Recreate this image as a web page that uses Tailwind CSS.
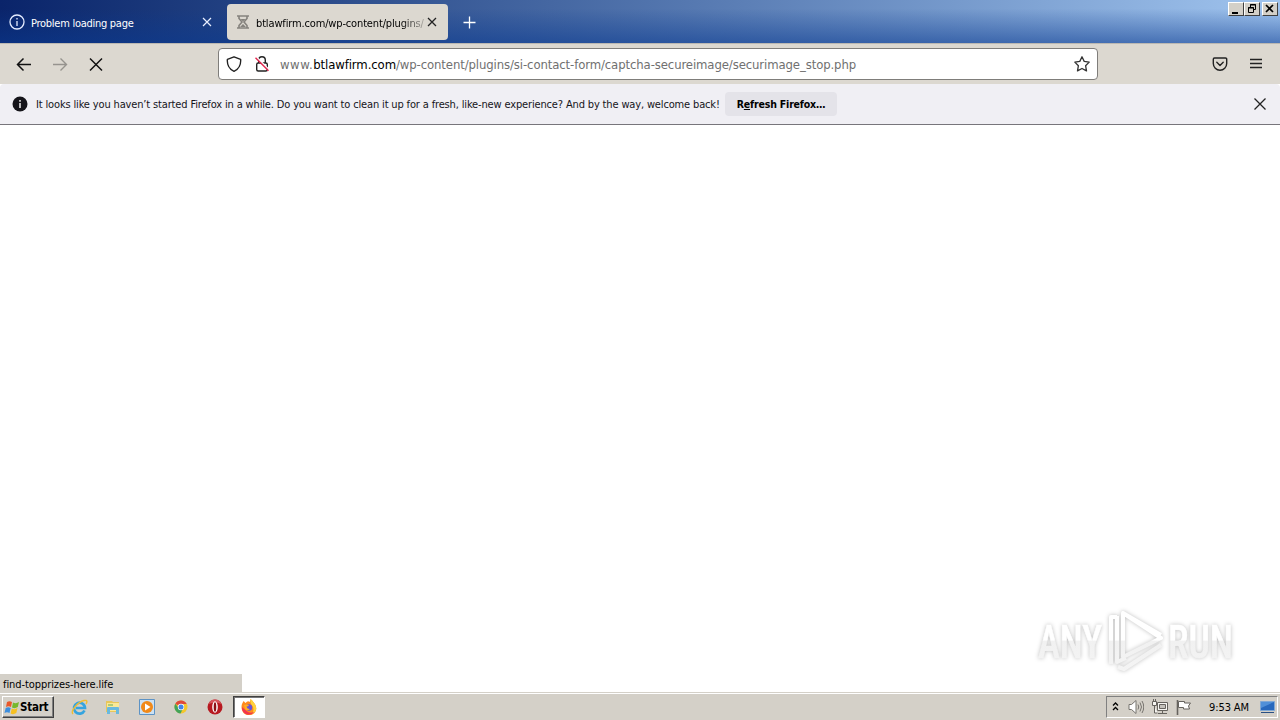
<!DOCTYPE html>
<html lang="en">
<head>
<meta charset="utf-8">
<title>Browser window</title>
<script src="https://cdn.jsdelivr.net/npm/@tailwindcss/browser@4"></script>
</head>
<body class="w-[1280px] h-[720px] overflow-hidden bg-white text-black text-[11px] leading-[14px] font-['DejaVu_Sans_Condensed','DejaVu_Sans',sans-serif] [font-stretch:condensed] whitespace-nowrap">
<div class="flex flex-col h-full">

  <!-- Tab strip -->
  <header class="relative h-[43px] shrink-0 flex items-start bg-linear-to-r from-[#0a246a] to-[#a0c4ee]">
    <div class="absolute inset-0 bg-linear-to-b from-transparent from-20% to-[#0a3a90]/55"></div>
    <div class="relative flex items-center w-[227px] h-[44px] pl-[9px] text-white">
      <svg class="size-4 shrink-0" viewBox="0 0 16 16" fill="none" stroke="#e4ecff" stroke-width="1.3"><circle cx="8" cy="8" r="7"/><path d="M8 7v5M8 4v1.6"/></svg>
      <span class="ml-[6px] mt-[3px] w-[160px] tracking-[-0.27px]">Problem loading page</span>
      <svg class="ml-[11px] size-[10px] shrink-0" viewBox="0 0 10 10" stroke="#e8efff" stroke-width="1.2"><path d="M1 1l8 8M9 1l-8 8"/></svg>
    </div>
    <div class="relative flex items-center mt-1 w-[221px] h-9 rounded bg-[#dcd8d0] pl-[9px]">
      <svg class="w-[14px] h-[14px] shrink-0" viewBox="0 0 14 14" fill="none" stroke="#85827d" stroke-width="1.6"><path d="M1 1h12M1 13h12"/><path d="M3 1v2.5L6 7l-3 3.500V13M11 1v2.500L8 7l3 3.500V13"/><path d="M4.500 4h5L7 6.500zM7 9l3 3H4z" fill="#85827d" stroke="none"/></svg>
      <span class="ml-[6px] mt-[3px] w-[168px] tracking-[-0.15px] [mask-image:linear-gradient(to_right,black_145px,transparent_175px)]">btlawfirm.com/wp-content/plugins/</span>
      <svg class="ml-[3px] size-[10px] shrink-0" viewBox="0 0 10 10" stroke="#222" stroke-width="1.3"><path d="M1 1l8 8M9 1l-8 8"/></svg>
    </div>
    <svg class="relative ml-[15px] mt-4 size-[13px]" viewBox="0 0 13 13" stroke="#fff" stroke-width="1.3"><path d="M6.500 .5v12M.5 6.500h12"/></svg>
    <div class="relative ml-auto mr-[2px] mt-[2px] flex">
      <div class="w-4 h-[14px] bg-[#d4d0c8] border border-t-white border-l-white border-b-[#404040] border-r-[#404040]"><svg class="w-[14px] h-3" viewBox="0 0 14 12"><path d="M3 9h6v2H3z"/></svg></div>
      <div class="w-4 h-[14px] bg-[#d4d0c8] border border-t-white border-l-white border-b-[#404040] border-r-[#404040]"><svg class="w-[14px] h-3" viewBox="0 0 14 12" fill="none" stroke="#000"><path d="M5.500 4V1.500h5v5H9M5 2h6"/><path d="M3.500 4.500h5v5h-5zM3 5h6"/></svg></div>
      <div class="ml-[2px] w-4 h-[14px] bg-[#d4d0c8] border border-t-white border-l-white border-b-[#404040] border-r-[#404040]"><svg class="w-[14px] h-3" viewBox="0 0 14 12" stroke="#000" stroke-width="1.700"><path d="M3 2l7 7M10 2L3 9"/></svg></div>
    </div>
  </header>

  <!-- Navigation bar -->
  <nav class="flex items-center h-[41px] shrink-0 bg-[#dcd8d0] border-t border-[#bbb8b2] pl-4">
    <svg class="size-4" viewBox="0 0 16 16" fill="none" stroke="#111" stroke-width="1.500"><path d="M15 8.500H1.500M7.500 2.500L1.500 8.500l6 6"/></svg>
    <svg class="ml-5 size-4" viewBox="0 0 16 16" fill="none" stroke="#96938e" stroke-width="1.400"><path d="M1 8.500h13.500M8.500 2.500l6 6-6 6"/></svg>
    <svg class="ml-5 size-4" viewBox="0 0 16 16" stroke="#111" stroke-width="1.500"><path d="M2 2.500l12 12M14 2.500L2 14.500"/></svg>
    <div class="ml-[114px] w-[880px] h-8 flex items-center bg-white border border-[#7f7d7a] rounded px-[7px]">
      <svg class="size-4" viewBox="0 0 16 16" fill="none" stroke="#222" stroke-width="1.400" stroke-linejoin="round"><path d="M8 .8L14.600 3.300c.5 5-1.800 10-6.600 12C3.200 13.300.9 8.300 1.400 3.300z"/></svg>
      <svg class="ml-3 size-4" viewBox="0 0 16 16" fill="none" stroke="#222" stroke-width="1.400"><path d="M4.700 7V4a3.300 3.300 0 0 1 6.600 0v3"/><rect x="2.700" y="7" width="10.600" height="8" rx="1.500"/><path d="M2.200 .8l13 13" stroke="#fff" stroke-width="1.500"/><path d="M1.500 1.800l13 13" stroke="#e22850"/></svg>
      <span class="ml-[10px] mt-px text-[13px] leading-4 text-[#707070] tracking-[-0.11px]"><span class="tracking-[0.5px]">www.</span><span class="text-black tracking-[-0.1px]">btlawfirm.com</span>/wp-content/plugins/si-contact-form/captcha-secureimage/securimage_stop.php</span>
      <svg class="ml-auto size-4" viewBox="0 0 16 16" fill="none" stroke="#333" stroke-width="1.300" stroke-linejoin="round"><path d="M8 .8l2.200 4.600 5 .7-3.600 3.600.9 5.200L8 12.500l-4.500 2.400.9-5.200L.8 6.100l5-.7z"/></svg>
    </div>
    <svg class="ml-[114px] size-4" viewBox="0 0 16 16" fill="none" stroke="#222" stroke-width="1.400" stroke-linecap="round" stroke-linejoin="round"><path d="M2.500 2h11a1.200 1.200 0 0 1 1.200 1.200V7.500a6.700 6.700 0 0 1-13.400 0V3.200A1.200 1.200 0 0 1 2.500 2zM4.800 6.300L8 9.400l3.200-3.100"/></svg>
    <svg class="ml-5 size-4" viewBox="0 0 16 16" stroke="#222" stroke-width="1.300"><path d="M2 3.500h12M2 7.500h12M2 11.500h12"/></svg>
  </nav>

  <!-- Notification bar -->
  <section class="flex items-center h-[41px] shrink-0 bg-[#f0eff4] border-b border-[#77757b] rounded-t pl-3 pr-[13px]">
    <svg class="size-4" viewBox="0 0 16 16"><circle cx="8" cy="8" r="7.500" fill="#15141a"/><path d="M8 7v5M8 4v1.700" stroke="#fff" stroke-width="1.400"/></svg>
    <span class="ml-2 mt-px w-[689px] tracking-[-0.15px] text-[#15141a]">It looks like you haven’t started Firefox in a while. Do you want to clean it up for a fresh, like-new experience? And by the way, welcome back!</span>
    <button class="w-[112px] h-6 rounded-sm bg-[#e4e3e9] text-[10.5px] font-bold tracking-[-0.18px]">R<span class="underline">e</span>fresh Firefox…</button>
    <svg class="ml-auto size-[14px]" viewBox="0 0 14 14" stroke="#222" stroke-width="1.300"><path d="M1.500 1.500l11 11M12.500 1.500l-11 11"/></svg>
  </section>

  <!-- Page -->
  <main class="flex-1 min-h-0 flex flex-col justify-end bg-white">
    <svg class="self-end mr-[40px] w-[210px] h-[70px] overflow-visible" viewBox="1030 604 210 70" fill="none">
      <defs><linearGradient id="fade" gradientUnits="userSpaceOnUse" x1="0" y1="610" x2="0" y2="670"><stop offset=".5" stop-color="#fff"/><stop offset=".52" stop-color="#f1f1f1"/><stop offset="1" stop-color="#f4f4f4"/></linearGradient></defs>
      <g class="[filter:drop-shadow(0_0_2px_rgb(0_0_0/0.25))]">
        <g font-family="Roboto, sans-serif" font-weight="500" font-size="47" fill="url(#fade)" stroke="url(#fade)" stroke-width=".6">
          <text x="1038" y="658" textLength="64" lengthAdjust="spacingAndGlyphs">ANY</text>
          <text x="1168" y="658" textLength="65" lengthAdjust="spacingAndGlyphs">RUN</text>
        </g>
        <path d="M1123 613v44l38-19zM1123 613l38 22M1117 617h-6v47M1117 616v46l9-4M1118 667l6 2 37-24" stroke="url(#fade)" stroke-width="4" stroke-linejoin="round"/>
      </g>
    </svg>
    <div class="w-[242px] h-[18px] bg-[#d4d0c8] pl-[3px] pt-1 tracking-[-0.08px]">find-topprizes-here.life</div>
  </main>

  <!-- Taskbar -->
  <footer class="flex items-start h-[28px] shrink-0 bg-[#d4d0c8] border-t border-[#d4d0c8] shadow-[inset_0_1px_#fff] pt-[3px] pl-[2px]">
    <button class="w-[52px] h-[22px] flex items-center bg-[#d4d0c8] border border-t-white border-l-white border-b-[#404040] border-r-[#404040] shadow-[inset_-1px_-1px_#808080] pl-px text-[11.5px] font-bold">
      <svg class="w-4 h-[15px] shrink-0" viewBox="0 0 16 15"><path d="M3 2q2.500-1.500 5 0L7 7Q4.500 5.500 2 7z" fill="#e9582a"/><path d="M9 2.500q3 1.500 6-.5l-1.200 5q-3 2-5.800.5z" fill="#77b82e"/><path d="M1.700 8q2.500-1.500 5 0l-1.200 5Q3 11.500.5 13z" fill="#3c8ede"/><path d="M7.800 8.500q3 1.500 5.700-.5l-1.200 5q-3 2-5.700.5z" fill="#f6c021"/></svg>
      <span class="tracking-[-0.25px]">Start</span>
    </button>
    <div class="flex items-center h-[22px] ml-[17px]">
      <svg class="size-[17px]" viewBox="0 0 17 17" fill="none"><path d="M13.500 11.500A5.500 5.500 0 1 1 14 9H5" stroke="#35a4df" stroke-width="2.700"/><path d="M2 15C-1 12 7 3 13 1.500c4-.8 3 2 2 3.500" stroke="#efbd34" stroke-width="1.400"/></svg>
      <svg class="ml-[17px] size-4" viewBox="0 0 16 16"><path d="M1 2h6l1 1h6v10H1z" fill="#e8c65b"/><path d="M2 4h12v8H2z" fill="#fae897"/><path d="M2 15V9q0-1 1-1h10q1 0 1 1v6h-3v-4H5v4z" fill="#69b9df"/><path d="M3 6h5" stroke="#65ad55"/></svg>
      <svg class="ml-[18px] size-4" viewBox="0 0 16 16"><path d="M.5.5h15v15H.5z" fill="#cce1f3" stroke="#5d93c5"/><circle cx="8" cy="8" r="6" fill="#f18919"/><path d="M6 4.500v7L11.500 8z" fill="#fff"/></svg>
      <svg class="ml-[19px] size-[14px]" viewBox="0 0 14 14"><circle cx="7" cy="7" r="6.500" fill="#f4c72c"/><path d="M7 7L1.300 3.700A6.500 6.500 0 0 1 12.700 4H7z" fill="#df493b"/><path d="M1.300 3.700A6.500 6.500 0 0 0 6.500 13.500L9 8.500H5z" fill="#42a35a"/><circle cx="7" cy="7" r="3.200" fill="#fff"/><circle cx="7" cy="7" r="2.500" fill="#4384e8"/></svg>
      <svg class="ml-[19px] size-4" viewBox="0 0 16 16"><circle cx="8" cy="8" r="7.500" fill="#b71920"/><path d="M1.500 5a7 7 0 0 1 13 0q-6-3-13 0z" fill="#d6535a"/><ellipse cx="8" cy="8" rx="2.800" ry="5.700" fill="#fff"/><ellipse cx="8" cy="8" rx="1.300" ry="4.800" fill="#8c1015"/></svg>
      <div class="ml-[10px] w-8 h-[22px] bg-white border border-t-[#404040] border-l-[#404040] border-b-white border-r-white flex items-center justify-center shadow-[inset_1px_1px_#777]">
        <svg class="size-4" viewBox="0 0 16 16"><path d="M1 5q1-2 1.500-3 1 1 2 2Q7 1 8.500 3q1-1 1-3 2 1.500 3.500 4 3 3 2 7a7.300 7.300 0 0 1-14 0Q0 8 1 5z" fill="#ff8a1e"/><path d="M9.500 0q2 1.500 3.500 4 3 3 2 7-1.500 3-3.500 4Q14 9 10 5q-1-3-.5-5z" fill="#ffd23b"/><path d="M1 8q-.5 6 6 7.800 4 0 6.500-2.800-5 2-8-1z" fill="#f23550"/><circle cx="8" cy="8.500" r="3.200" fill="#6754d8"/><path d="M3 6q3-1 5 0-.5 1.500-2.500 1.500Q6 10 9 10q-3 2.500-5 0z" fill="#ffad23"/></svg>
      </div>
    </div>
    <div class="ml-auto mr-[2px] w-[172px] h-[22px] flex items-center border border-t-[#808080] border-l-[#808080] border-b-white border-r-white pl-[5px]">
      <svg class="w-[7px] h-[10px]" viewBox="0 0 7 10" fill="none" stroke="#000" stroke-width="1.300"><path d="M1 3.500L3.500 1 6 3.500M1 8l2.500-2.500L6 8"/></svg>
      <svg class="ml-[9px] w-4 h-4" viewBox="0 0 16 16" fill="none" stroke="#77746f"><path d="M1 5.500h2.500L8 1.500v13L3.500 10.500H1z" fill="#fff"/><path d="M10 5.500q1.500 2.500 0 5M12 3.500q3 4.500 0 9M14 2q3.500 6 0 12"/></svg>
      <svg class="ml-2 size-4" viewBox="0 0 16 16" fill="none" stroke="#66635e"><path d="M5.500 3.500h10v8h-10z" fill="#f7f6f2"/><path d="M7.500 5.500h6v4h-6z" fill="#c5c2bc"/><path d="M10.500 12v2M6 14.500h9"/><path d="M.5 2.500h4v4h-4zM1.500 0v2M3.500 0v2M2.500 7v7h3" fill="#f7f6f2"/></svg>
      <svg class="ml-2 size-4" viewBox="0 0 16 16" stroke="#66635e"><path d="M1.500 1v15" stroke-width="1.600"/><path d="M2.500 2.500h6V4h6l-2 3 1 3h-6V8.500h-5z" fill="#fff"/></svg>
      <span class="ml-[17px] mt-px tracking-[-0.1px] w-[44px]">9:53 AM</span>
      <svg class="ml-[7px] w-[15px] h-[14px]" viewBox="0 0 15 14"><path d="M.5 1.500h14v9H.5z" fill="#2869bd" stroke="#80a8d4"/><path d="M1 2h13L1 8z" fill="#5090d8"/><path d="M1 12.500h13" stroke="#294f83"/></svg>
    </div>
  </footer>
</div>
</body>
</html>
